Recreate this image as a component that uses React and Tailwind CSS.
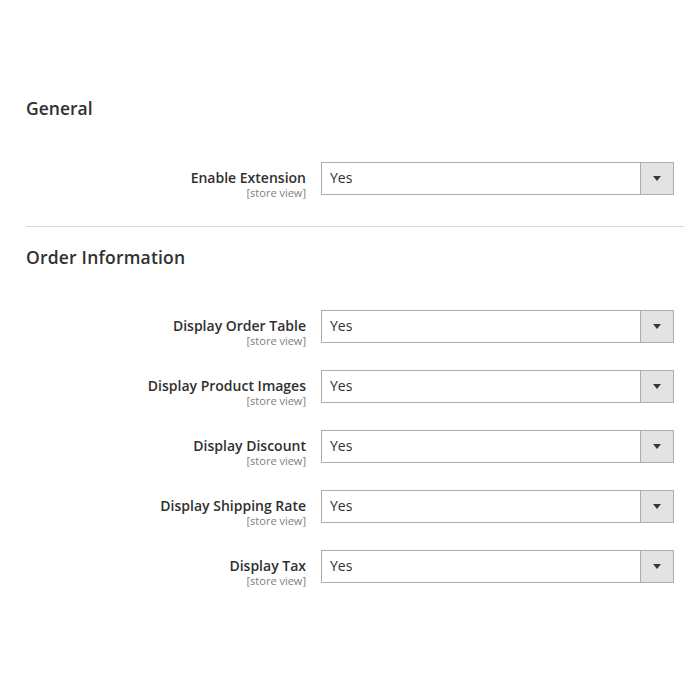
import React from 'react';

const font = { fontFamily: '"Open Sans", "Liberation Sans", sans-serif' };

const Field = ({ label, className = '' }) => (
  <div className={`flex items-start ${className}`}>
    <div className="w-[280px] pt-[7px] text-right">
      <div className="text-[14px] leading-[17px] font-semibold text-[#303030]">{label}</div>
      <div className="text-[11px] leading-[14px] text-[#808080]">[store view]</div>
    </div>
    <div className="ml-[15px] flex h-[33px] w-[353px] border border-[#adadad] bg-white">
      <div className="flex flex-1 items-center pl-2 pb-[3px] text-[14px] text-[#303030]">Yes</div>
      <div className="flex w-[33px] items-center justify-center border-l border-[#adadad] bg-[#e3e3e3]">
        <svg width="8" height="5" viewBox="0 0 8 5">
          <path d="M0 0 H8 L4 5 Z" fill="#41362f" />
        </svg>
      </div>
    </div>
  </div>
);

export default function App() {
  return (
    <div className="min-h-[700px] w-[700px] bg-white pt-[96px] pl-[26px] pr-[16px]" style={font}>
      <h2 className="h-6 text-[17.5px] leading-6 font-semibold text-[#303030]">General</h2>
      <Field label="Enable Extension" className="mt-[42px]" />
      <div className="mt-[26px] border-t border-[#d6d6d6]" />
      <h2 className="mt-[18px] h-6 text-[17.5px] leading-6 font-semibold text-[#303030] tracking-[0.2px]">Order Information</h2>
      <div className="mt-[41px] flex flex-col gap-[22px]">
        <Field label="Display Order Table" />
        <Field label="Display Product Images" />
        <Field label="Display Discount" />
        <Field label="Display Shipping Rate" />
        <Field label="Display Tax" />
      </div>
    </div>
  );
}
